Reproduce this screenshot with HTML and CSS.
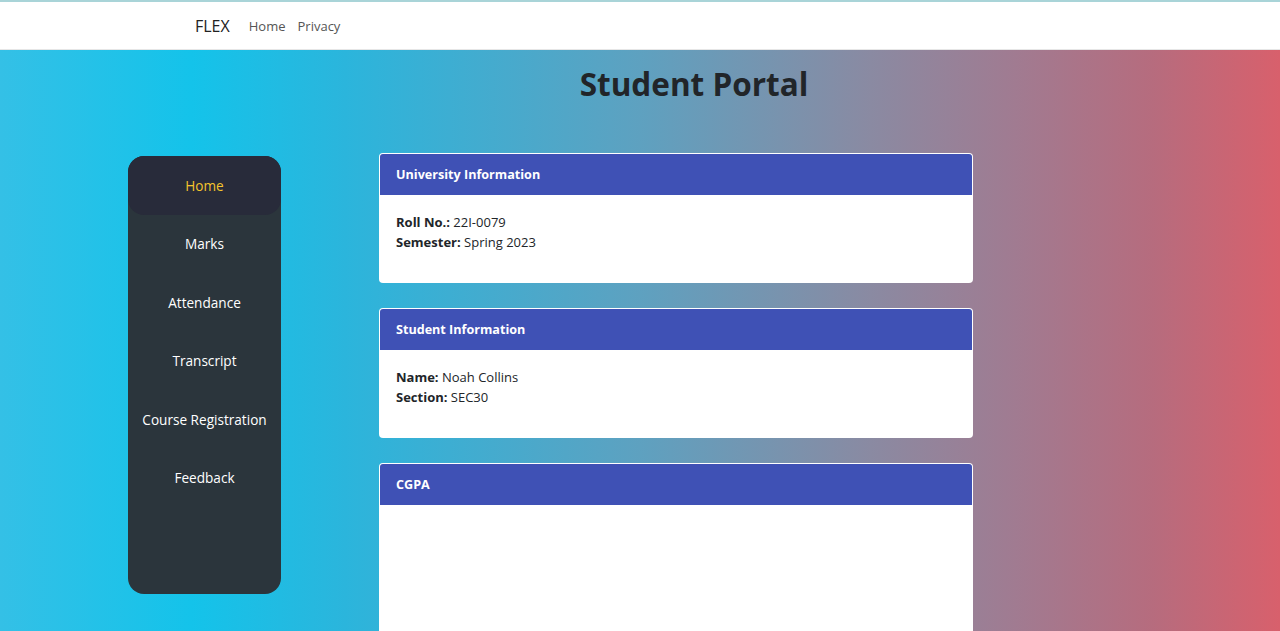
FILE: index.html
```html
<!DOCTYPE html>
<html lang="en">
<head>
<meta charset="utf-8">
<title>Student Portal - FLEX</title>
<link rel="stylesheet" href="styles.css">
</head>
<body>
<header class="topbar">
  <nav class="topnav">
    <a class="brand" href="#">FLEX</a>
    <a class="navlink" href="#">Home</a>
    <a class="navlink" href="#">Privacy</a>
  </nav>
</header>
<main class="page">
  <h1 class="title">Student Portal</h1>
  <div class="layout">
    <aside class="sidebar">
      <a class="side-item active" href="#">Home</a>
      <a class="side-item" href="#">Marks</a>
      <a class="side-item" href="#">Attendance</a>
      <a class="side-item" href="#">Transcript</a>
      <a class="side-item" href="#">Course Registration</a>
      <a class="side-item" href="#">Feedback</a>
    </aside>
    <section class="content">
      <div class="card">
        <div class="card-head">University Information</div>
        <div class="card-body">
          <p><b>Roll No.:</b> 22I-0079</p>
          <p><b>Semester:</b> Spring 2023</p>
        </div>
      </div>
      <div class="card">
        <div class="card-head">Student Information</div>
        <div class="card-body">
          <p><b>Name:</b> Noah Collins</p>
          <p><b>Section:</b> SEC30</p>
        </div>
      </div>
      <div class="card card-tall">
        <div class="card-head">CGPA</div>
        <div class="card-body"></div>
      </div>
    </section>
  </div>
</main>
</body>
</html>
```
FILE: styles.css
```css
* { box-sizing: border-box; }
html, body { margin: 0; padding: 0; }
body {
  font-family: "Open Sans", "Noto Sans", sans-serif;
  color: #212529;
  background: #ffffff;
  overflow: hidden;
}
a { text-decoration: none; }

.topbar {
  border-top: 2px solid #a9d4d8;
  background: #ffffff;
  height: 50px;
  border-bottom: 1px solid #e6e6e6;
}
.topnav {
  display: flex;
  align-items: center;
  height: 100%;
  padding-left: 195px;
}
.brand {
  font-size: 16px;
  color: #222;
  margin-right: 19px;
}
.navlink {
  font-size: 13px;
  color: #555;
  margin-right: 12px;
}

.page {
  background: linear-gradient(to right,
    #34c0e6 0%,
    #14c3ea 15%,
    #2bb5dc 27%,
    #5ea1c0 50%,
    #8a8aa2 68%,
    #a27a90 80%,
    #b66c7e 90%,
    #d8606c 100%);
  padding: 12px 20px 40px 128px;
  min-height: 700px;
}
.title {
  margin: 0;
  text-align: center;
  font-size: 31.5px;
  font-weight: 700;
  color: #212529;
  line-height: 44px;
}
.layout {
  display: flex;
  align-items: flex-start;
  margin-top: 47px;
}
.sidebar {
  width: 153px;
  height: 438px;
  margin-top: 3px;
  background: #2b353c;
  border-radius: 16px;
  display: flex;
  flex-direction: column;
}
.side-item {
  height: 58.5px;
  display: flex;
  align-items: center;
  justify-content: center;
  color: #ffffff;
  font-size: 13.6px;
  white-space: nowrap;
}
.side-item.active {
  background: #282b3a;
  color: #f4c42c;
  border-radius: 16px;
}
.content {
  margin-left: 98px;
  width: 594px;
  display: flex;
  flex-direction: column;
  gap: 25px;
}
.card {
  background: #ffffff;
  border-radius: 4px;
  overflow: hidden;
  border: 1px solid rgba(255,255,255,0.5);
}
.card-head {
  background: #3f51b5;
  color: #ffffff;
  font-weight: 700;
  font-size: 12.6px;
  height: 41px;
  display: flex;
  align-items: center;
  padding-left: 16px;
}
.card-body {
  padding: 17px 16px 28px;
  font-size: 13px;
  height: 87px;
}
.card-body p {
  margin: 0;
  line-height: 20px;
}
.card-tall .card-body { height: 200px; }
```
